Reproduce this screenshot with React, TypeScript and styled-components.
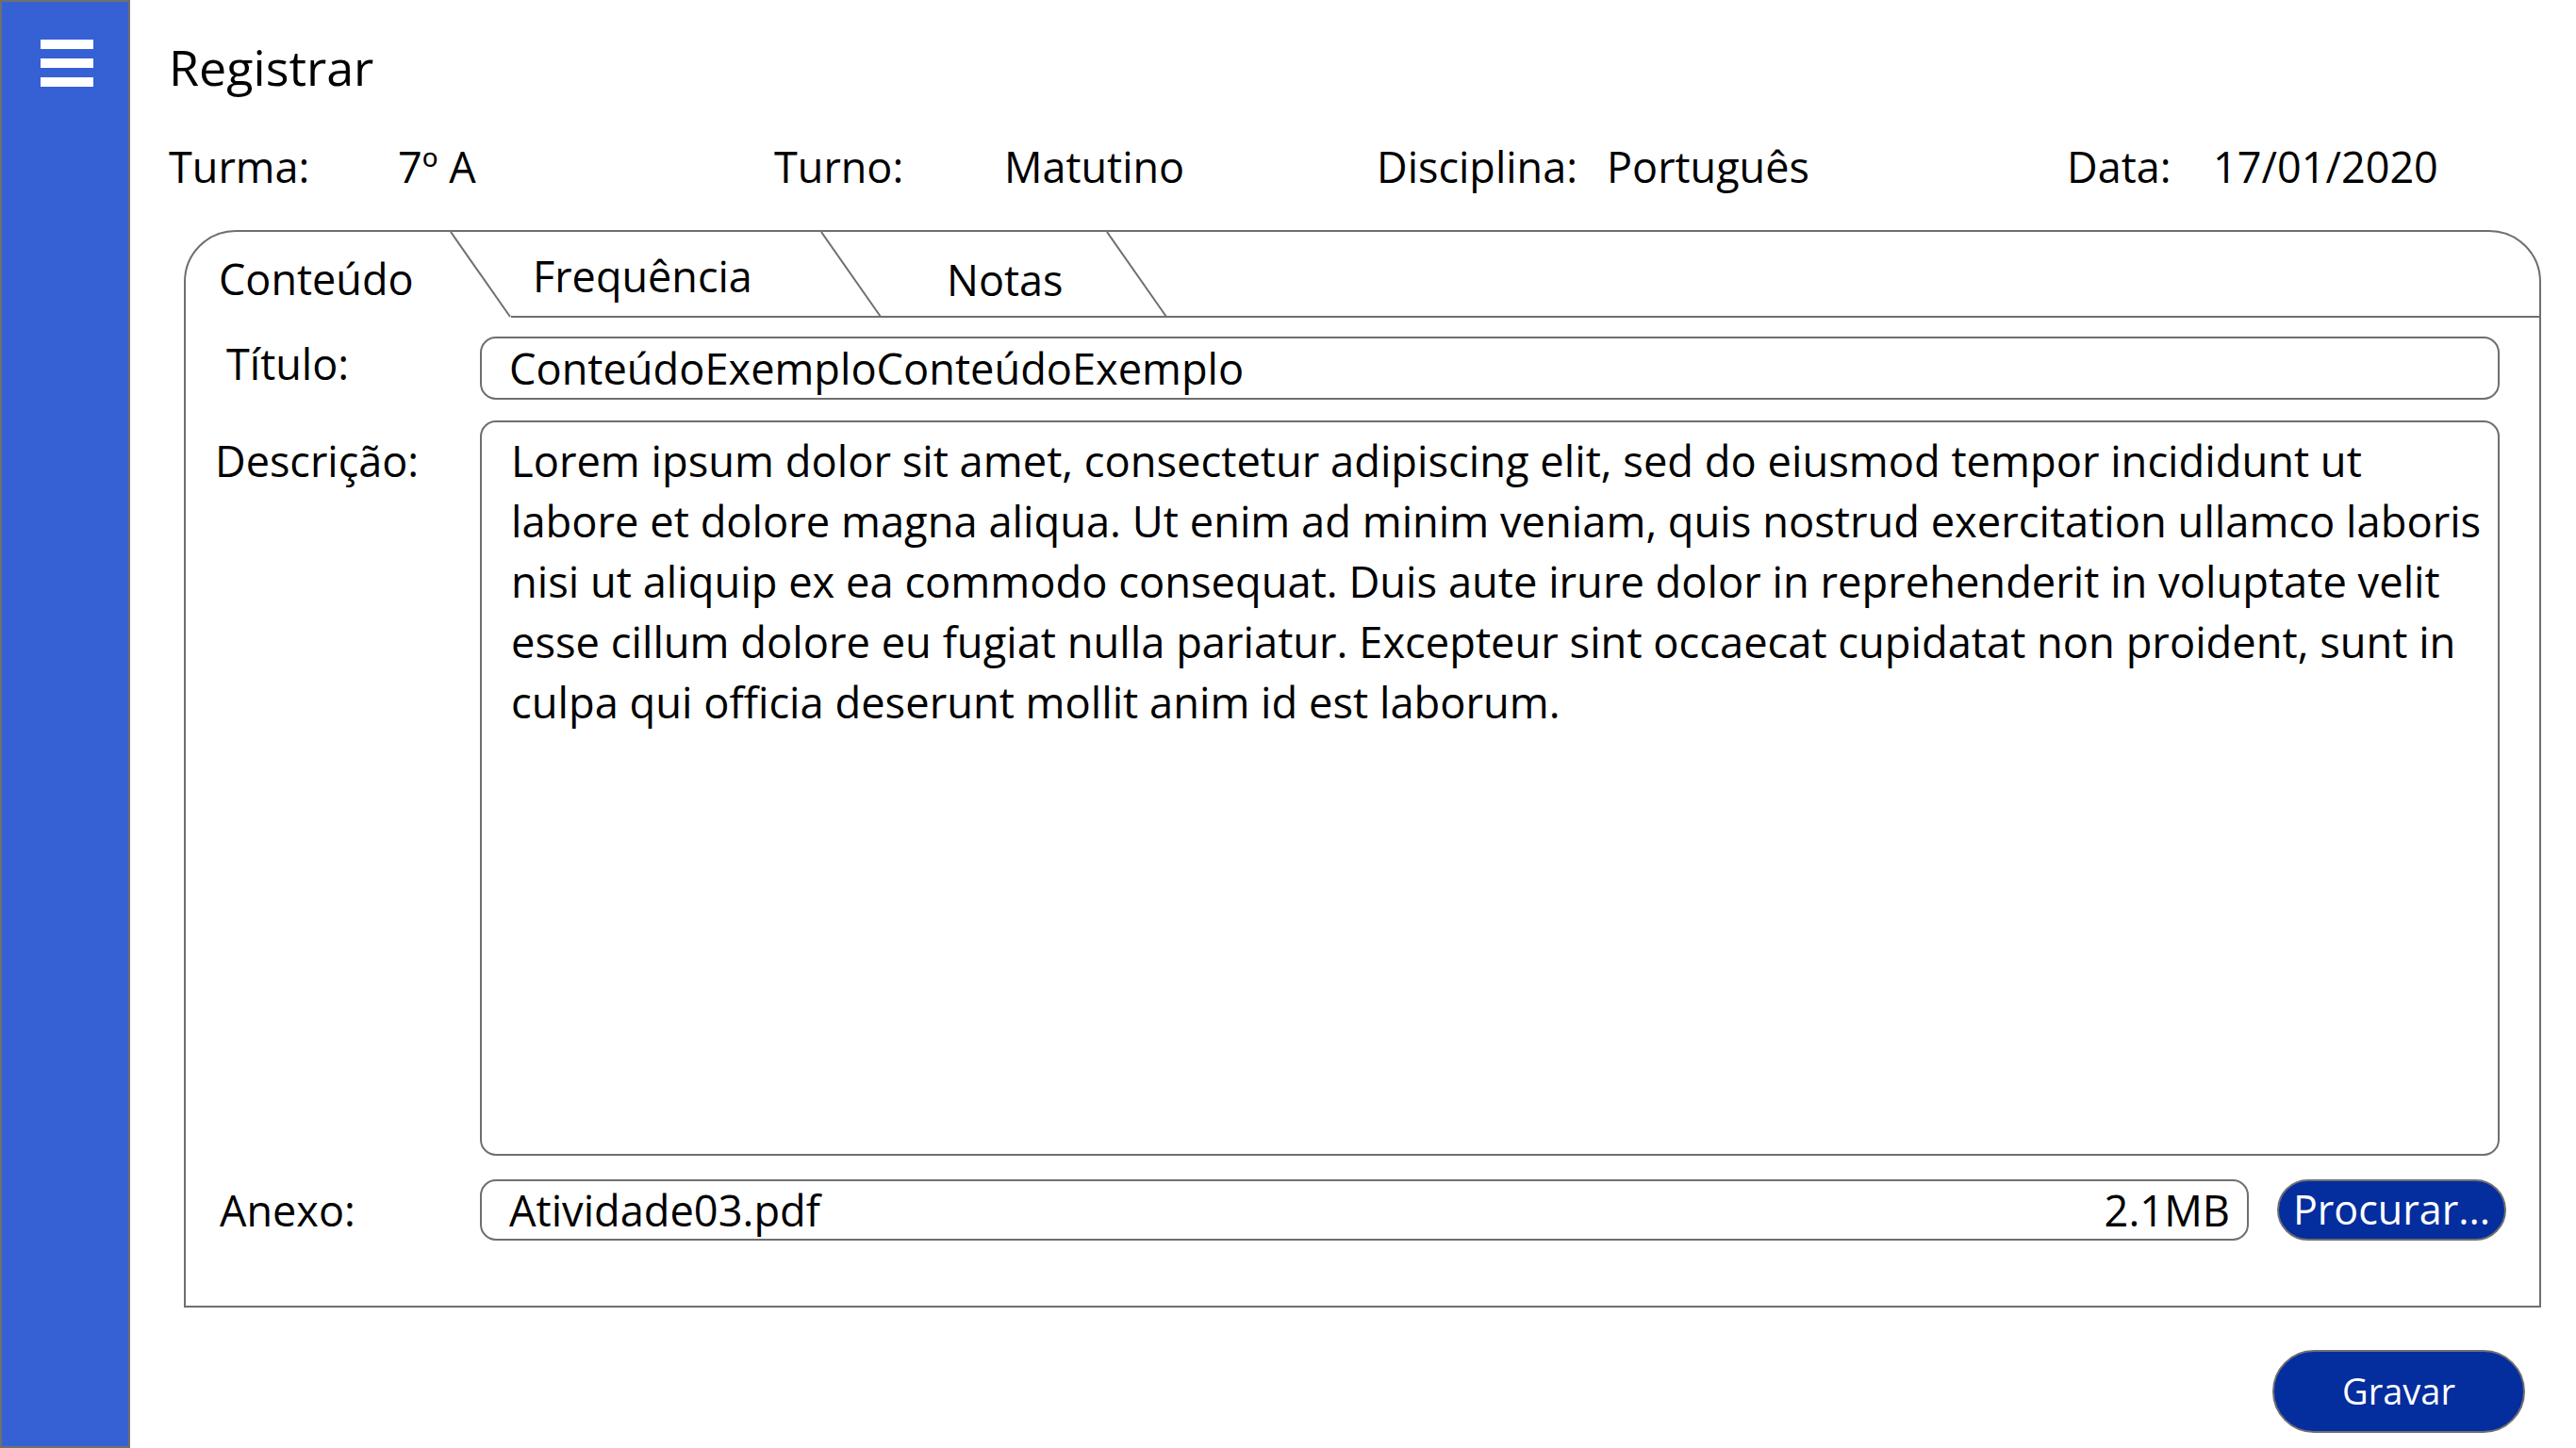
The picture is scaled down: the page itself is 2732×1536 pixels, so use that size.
import React from "react";
import styled, { createGlobalStyle } from "styled-components";

const GRAY = "#6f6f6f";
const BLUE = "#3561d5";
const DARK = "#042d9e";

const GlobalStyle = createGlobalStyle`
  html, body { margin: 0; padding: 0; background: #ffffff; }
  body {
    font-family: "Open Sans", "Noto Sans", "Liberation Sans", sans-serif;
    color: #000000;
  }
  *, *::before, *::after { box-sizing: border-box; }
`;

const Page = styled.div`
  display: flex;
  width: 2732px;
  height: 1536px;
  overflow: hidden;
  background: #ffffff;
`;

const Sidebar = styled.aside`
  flex: 0 0 138px;
  height: 1536px;
  background: ${BLUE};
  border: 2px solid ${GRAY};
  padding: 40px 0 0 41px;
`;

const Main = styled.main`
  flex: 1;
  display: flex;
  flex-direction: column;
  padding-left: 41px;
`;

const Title = styled.h1`
  margin: 45px 0 0 0;
  font-size: 52px;
  line-height: 52px;
  font-weight: 400;
`;

const InfoRow = styled.div`
  display: grid;
  grid-template-columns: 243px 399px 244px 395px 244px 488px 155px auto;
  margin-top: 57px;
  font-size: 45px;
  line-height: 45px;
`;

const InfoText = styled.span`
  white-space: nowrap;
`;

const Panel = styled.section`
  margin: 45px 0 0 16px;
  width: 2500px;
  height: 1143px;
  border: 2px solid ${GRAY};
  border-radius: 55px 55px 0 0;
  display: flex;
  flex-direction: column;
`;

const TabStrip = styled.div`
  display: flex;
  height: 91px;
  flex: 0 0 91px;
`;

const Tab = styled.div<{ $w: number; $pad: number; $dy: number; $active?: boolean }>`
  flex: 0 0 ${(p) => p.$w}px;
  display: flex;
  align-items: center;
  padding-left: ${(p) => p.$pad}px;
  padding-top: ${(p) => p.$dy}px;
  font-size: 45px;
  line-height: 45px;
  border-bottom: 2px solid ${(p) => (p.$active ? "transparent" : GRAY)};
  white-space: nowrap;
`;

const TabFiller = styled.div`
  flex: 1;
  border-bottom: 2px solid ${GRAY};
`;

const SlantSvg = styled.svg`
  flex: 0 0 65px;
  display: block;
`;

const Slant = ({ underline }: { underline: boolean }) => (
  <SlantSvg width="65" height="91" viewBox="0 0 65 91">
    <line x1="1" y1="0" x2="64" y2="90" stroke={GRAY} strokeWidth="2" />
    {underline && <rect x="0" y="89" width="65" height="2" fill={GRAY} />}
  </SlantSvg>
);

const Form = styled.div`
  display: grid;
  grid-template-columns: 312px 1fr;
  grid-auto-rows: auto;
  row-gap: 0;
  padding: 20px 42px 0 0;
`;

const Label = styled.div<{
  $indent: number;
  $top?: number;
  $bottom?: number;
  $mt?: number;
  $center?: boolean;
}>`
  padding-left: ${(p) => p.$indent}px;
  padding-top: ${(p) => p.$top ?? 0}px;
  padding-bottom: ${(p) => p.$bottom ?? 0}px;
  margin-top: ${(p) => p.$mt ?? 0}px;
  font-size: 45px;
  line-height: 45px;
  display: flex;
  align-items: ${(p) => (p.$center ? "center" : "flex-start")};
  white-space: nowrap;
`;

const TextField = styled.div<{ $h: number }>`
  height: ${(p) => p.$h}px;
  border: 2px solid ${GRAY};
  border-radius: 17px;
  display: flex;
  align-items: center;
  justify-content: space-between;
  padding: 0 18px 0 29px;
  font-size: 45.2px;
  line-height: 45px;
  white-space: nowrap;
`;

const TextArea = styled.div`
  height: 780px;
  margin-top: 22px;
  border: 2px solid ${GRAY};
  border-radius: 17px;
  padding: 9px 10px 0 31px;
  font-size: 45.3px;
  line-height: 64px;
`;

const Line = styled.span`
  display: block;
  white-space: nowrap;
`;

const AttachRow = styled.div`
  display: flex;
  align-items: center;
  gap: 30px;
  margin: 25px -7px 0 0;
`;

const AttachField = styled(TextField)`
  flex: 1;
`;

const PillButton = styled.button<{ $w: number; $h: number; $fs: number }>`
  flex: 0 0 ${(p) => p.$w}px;
  width: ${(p) => p.$w}px;
  height: ${(p) => p.$h}px;
  border: 2px solid ${GRAY};
  border-radius: ${(p) => p.$h / 2}px;
  background: ${DARK};
  color: #ffffff;
  font-family: "Open Sans", "Noto Sans", "Liberation Sans", sans-serif;
  font-size: ${(p) => p.$fs}px;
  line-height: ${(p) => p.$fs}px;
  padding: 0 0 2px 0;
  display: flex;
  align-items: center;
  justify-content: center;
  white-space: nowrap;
`;

const Footer = styled.div`
  display: flex;
  justify-content: flex-end;
  padding-right: 54px;
  margin-top: 45px;
`;

const MenuIcon = () => (
  <svg width="56" height="50" viewBox="0 0 56 50" style={{ display: "block" }}>
    <rect x="0" y="0" width="56" height="10" fill="#ffffff" />
    <rect x="0" y="20" width="56" height="10" fill="#ffffff" />
    <rect x="0" y="40" width="56" height="10" fill="#ffffff" />
  </svg>
);

const loremLines = [
  "Lorem ipsum dolor sit amet, consectetur adipiscing elit, sed do eiusmod tempor incididunt ut",
  "labore et dolore magna aliqua. Ut enim ad minim veniam, quis nostrud exercitation ullamco laboris",
  "nisi ut aliquip ex ea commodo consequat. Duis aute irure dolor in reprehenderit in voluptate velit",
  "esse cillum dolore eu fugiat nulla pariatur. Excepteur sint occaecat cupidatat non proident, sunt in",
  "culpa qui officia deserunt mollit anim id est laborum.",
];

export default function App() {
  return (
    <>
      <GlobalStyle />
      <Page>
        <Sidebar>
          <MenuIcon />
        </Sidebar>
        <Main>
          <Title>Registrar</Title>
          <InfoRow>
            <InfoText>Turma:</InfoText>
            <InfoText>7º A</InfoText>
            <InfoText>Turno:</InfoText>
            <InfoText>Matutino</InfoText>
            <InfoText>Disciplina:</InfoText>
            <InfoText>Português</InfoText>
            <InfoText>Data:</InfoText>
            <InfoText>17/01/2020</InfoText>
          </InfoRow>
          <Panel>
            <TabStrip>
              <Tab $w={280} $pad={35} $dy={10} $active>
                Conteúdo
              </Tab>
              <Slant underline={false} />
              <Tab $w={328} $pad={23} $dy={4}>
                Frequência
              </Tab>
              <Slant underline />
              <Tab $w={238} $pad={69} $dy={11}>
                Notas
              </Tab>
              <Slant underline />
              <TabFiller />
            </TabStrip>
            <Form>
              <Label $indent={43} $center $bottom={10}>
                Título:
              </Label>
              <TextField $h={67}>ConteúdoExemploConteúdoExemplo</TextField>

              <Label $indent={31} $top={42}>
                Descrição:
              </Label>
              <TextArea>
                {loremLines.map((l, i) => (
                  <Line key={i}>{l}</Line>
                ))}
              </TextArea>

              <Label $indent={36} $center $mt={25}>
                Anexo:
              </Label>
              <AttachRow>
                <AttachField $h={65}>
                  <span>Atividade03.pdf</span>
                  <span>2.1MB</span>
                </AttachField>
                <PillButton $w={243} $h={65} $fs={43}>
                  Procurar...
                </PillButton>
              </AttachRow>
            </Form>
          </Panel>
          <Footer>
            <PillButton $w={268} $h={88} $fs={38}>
              Gravar
            </PillButton>
          </Footer>
        </Main>
      </Page>
    </>
  );
}
